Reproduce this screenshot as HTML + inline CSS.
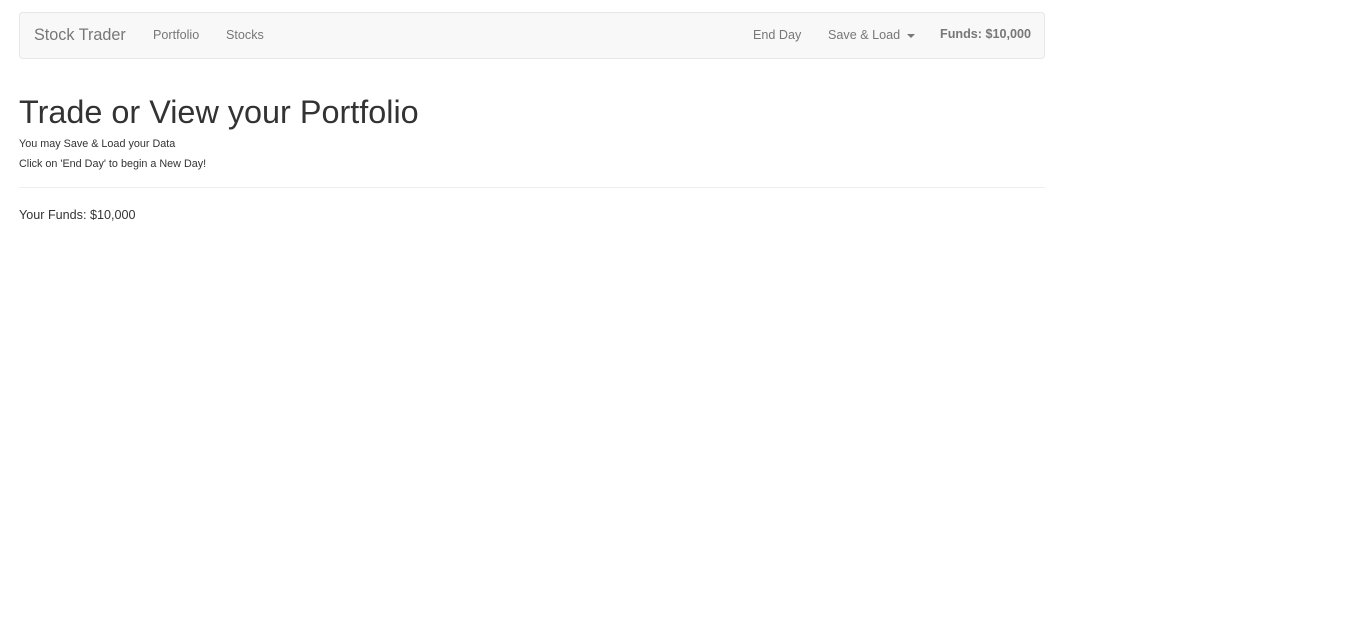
<!DOCTYPE html>
<html><head><style>
body{margin:0;font-family:"Liberation Sans",sans-serif;color:#333;background:#fff;}
.nav{position:absolute;left:19px;top:12px;width:1024px;height:45px;background:#f8f8f8;border:1px solid #e7e7e7;border-radius:4px;}
.nav span{position:absolute;top:15px;font-size:12.6px;color:#777;white-space:nowrap;}
.brand{font-size:16.2px!important;top:13px!important;}
.caret{display:inline-block;width:0;height:0;border-top:4px solid #777;border-left:4px solid transparent;border-right:4px solid transparent;vertical-align:middle;margin-left:3px;}
h1{position:absolute;left:19px;top:94px;margin:0;font-size:32.4px;font-weight:400;line-height:36px;}
.p{position:absolute;left:19px;font-size:10.8px;}
hr{position:absolute;left:19px;top:187px;width:1026px;margin:0;border:0;border-top:1px solid #eee;}
</style></head><body>
<div class="nav">
<span class="brand" style="left:14px">Stock Trader</span>
<span style="left:133px">Portfolio</span>
<span style="left:206px">Stocks</span>
<span style="left:733px">End Day</span>
<span style="left:808px">Save &amp; Load <i class="caret"></i></span>
<span style="left:920px;top:14px;font-weight:bold">Funds: $10,000</span>
</div>
<h1>Trade or View your Portfolio</h1>
<div class="p" style="top:138px">You may Save &amp; Load your Data</div>
<div class="p" style="top:158px">Click on 'End Day' to begin a New Day!</div>
<hr>
<div class="p" style="top:208px;font-size:12.6px">Your Funds: $10,000</div>
</body></html>
